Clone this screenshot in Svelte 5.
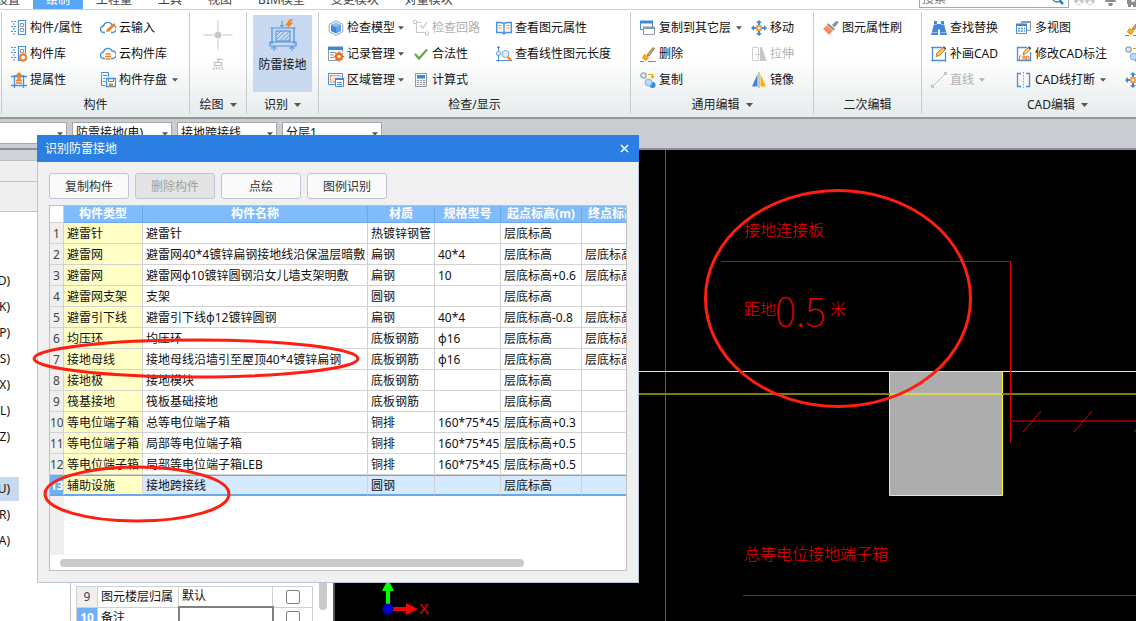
<script lang="ts">
	interface Tool {
		label: string;
		icon: string;
		menu?: boolean;
		disabled?: boolean;
		iconOnly?: boolean;
	}

	interface Group {
		id: string;
		title: string;
		menu?: boolean;
		big?: boolean;
		columns: Tool[][];
	}

	const tabs = ['设置', '绘制', '工程量', '工具', '视图', 'BIM模型', '变更模块', '对量模块'];
	let activeTab = $state('绘制');

	const groups: Group[] = [
		{
			id: 'component',
			title: '构件',
			columns: [
				[
					{ label: '构件/属性', icon: 'props' },
					{ label: '构件库', icon: 'library' },
					{ label: '提属性', icon: 'extract' }
				],
				[
					{ label: '云输入', icon: 'cloudpen' },
					{ label: '云构件库', icon: 'cloud' },
					{ label: '构件存盘', icon: 'save', menu: true }
				]
			]
		},
		{ id: 'draw', title: '绘图', menu: true, big: true, columns: [[{ label: '点', icon: 'point', disabled: true }]] },
		{ id: 'detect', title: '识别', menu: true, big: true, columns: [[{ label: '防雷接地', icon: 'ground' }]] },
		{
			id: 'check',
			title: '检查/显示',
			columns: [
				[
					{ label: '检查模型', icon: 'cube', menu: true },
					{ label: '记录管理', icon: 'record', menu: true },
					{ label: '区域管理', icon: 'region', menu: true }
				],
				[
					{ label: '检查回路', icon: 'circuit', disabled: true },
					{ label: '合法性', icon: 'tick' },
					{ label: '计算式', icon: 'calc' }
				],
				[
					{ label: '查看图元属性', icon: 'book' },
					{ label: '查看线性图元长度', icon: 'length' }
				]
			]
		},
		{
			id: 'edit',
			title: '通用编辑',
			menu: true,
			columns: [
				[
					{ label: '复制到其它层', icon: 'layers', menu: true },
					{ label: '删除', icon: 'broom' },
					{ label: '复制', icon: 'copy' }
				],
				[
					{ label: '移动', icon: 'move' },
					{ label: '拉伸', icon: 'stretch', disabled: true },
					{ label: '镜像', icon: 'mirror' }
				]
			]
		},
		{ id: 'second', title: '二次编辑', columns: [[{ label: '图元属性刷', icon: 'brush' }]] },
		{
			id: 'cad',
			title: 'CAD编辑',
			menu: true,
			columns: [
				[
					{ label: '查找替换', icon: 'find' },
					{ label: '补画CAD', icon: 'pencil' },
					{ label: '直线', icon: 'line', menu: true, disabled: true }
				],
				[
					{ label: '多视图', icon: 'views' },
					{ label: '修改CAD标注', icon: 'cadpen' },
					{ label: 'CAD线打断', icon: 'break', menu: true }
				],
				[
					{ label: '删除', icon: 'broom', iconOnly: true },
					{ label: '复制', icon: 'copy', iconOnly: true },
					{ label: '移动', icon: 'move', iconOnly: true }
				]
			]
		}
	];

	const filters = ['', '防雷接地(电)', '接地跨接线', '分层1'];
	const shortcuts = ['D)', 'K)', 'P)', 'S)', 'X)', 'L)', 'Z)', '', 'U)', 'R)', 'A)'];

	const headers = ['构件类型', '构件名称', '材质', '规格型号', '起点标高(m)', '终点标高(m)'];
	const rows = [
		['避雷针', '避雷针', '热镀锌钢管', '', '层底标高', ''],
		['避雷网', '避雷网40*4镀锌扁钢接地线沿保温层暗敷', '扁钢', '40*4', '层底标高', '层底标高'],
		['避雷网', '避雷网φ10镀锌圆钢沿女儿墙支架明敷', '扁钢', '10', '层底标高+0.6', '层底标高'],
		['避雷网支架', '支架', '圆钢', '', '层底标高', ''],
		['避雷引下线', '避雷引下线φ12镀锌圆钢', '扁钢', '40*4', '层底标高-0.8', '层底标高'],
		['均压环', '均压环', '底板钢筋', 'φ16', '层底标高', '层底标高'],
		['接地母线', '接地母线沿墙引至屋顶40*4镀锌扁钢', '底板钢筋', 'φ16', '层底标高', '层底标高'],
		['接地极', '接地模块', '底板钢筋', '', '层底标高', ''],
		['筏基接地', '筏板基础接地', '底板钢筋', '', '层底标高', ''],
		['等电位端子箱', '总等电位端子箱', '铜排', '160*75*45', '层底标高+0.3', ''],
		['等电位端子箱', '局部等电位端子箱', '铜排', '160*75*45', '层底标高+0.5', ''],
		['等电位端子箱', '局部等电位端子箱LEB', '铜排', '160*75*45', '层底标高+0.5', ''],
		['辅助设施', '接地跨接线', '圆钢', '', '层底标高', '']
	];
	let selected = $state(12);
</script>

{#snippet arrow()}
	<svg class="arrow" width="7" height="4" viewBox="0 0 7 4" aria-hidden="true"><path d="M0 0h7L3.500 4z" fill="currentColor" /></svg>
{/snippet}

{#snippet icon(name: string)}
	<svg class="icon" viewBox="0 0 16 16" fill="none" stroke="#4a8fd9" aria-hidden="true">
		{#if name === 'props' || name === 'library'}
			<path d="M0 1.500h5M0 6.500h5M0 11.500h5M2 4h3M2 9h3M2 14h3" stroke-dasharray="2 1" />
			<path d="M7.500 .5h7v14h-7z" stroke-width="1.200" />
			<path d="M9.500 3.500h3v3h-3zM9.500 8.500h3v3h-3z" stroke="#8b99a8" />
			{#if name === 'library'}
				<circle cx="12" cy="11.500" r="3" stroke="#f07f2a" stroke-width="2" fill="#fff" />
				<path d="M12 7v2M12 14v2M7.500 11.500h2M14.500 11.500H16M9 8.500l1 1M14 13.500l1 1M9 14.500l1-1" stroke="#f07f2a" />
			{/if}
		{:else if name === 'extract'}
			<path d="M3.500 3v13M12.500 3v13M0 4.500h16M0 13.500h16" stroke-width="1.300" />
			<path d="M8 0L4 4h2.500v4h3V4H12z" fill="#f07f2a" stroke="none" />
			<path d="M5 8.500h6M5 11h6" stroke="#f07f2a" stroke-width="1.500" />
		{:else if name === 'cloudpen' || name === 'cloud'}
			<path d="M5 12.500H4A3.200 3.200 0 0 1 3.500 6 4.500 4.500 0 0 1 12 5a3.700 3.700 0 0 1 1 7.500h-2" stroke-width="1.400" />
			{#if name === 'cloudpen'}
				<path d="M6 12l1-3 7-6 1.500 2L9 11.500z" fill="#f58220" stroke="none" />
			{:else}
				<path d="M5.500 8h5M5 10.500h6M5.500 13h5" stroke="#f58220" stroke-width="1.600" />
			{/if}
		{:else if name === 'save'}
			<path d="M5 13.500H1.500V.5h7V5M3 3.500h4M3 6.500h2M3 9.500h2" />
			<path d="M6.500 6.500h9v8h-9z" fill="#fff" stroke-width="1.400" />
			<path d="M8.500 6.500h5v3h-5z" />
			<path d="M9 11.500h4v3H9z" fill="#f58220" stroke="none" />
		{:else if name === 'point'}
			<path d="M8 .7v14.600M.7 8h14.600" stroke="#c4c4c4" stroke-width=".500" />
			<circle cx="8" cy="8" r="2" fill="#c8c8c8" stroke="#fff" stroke-width=".400" />
		{:else if name === 'ground'}
			<path d="M1.800 4.500h12.500M2.500 4.500v8M13.500 4.500v8M1.500 11.500h13v2h-13zM3.500 13.500v1M12.500 13.500v1M2 14.500h3M11 14.500h3M3 15.500h1M12 15.500h1" stroke-width=".600" />
			<path d="M4.500 6h7v5h-7z" stroke-width=".500" />
			<path d="M5 8l2-2M5 10l4-4M6.500 10.800L11 6.300M8.500 10.800l2.700-2.700M10.500 10.800l.7-.7" stroke-width=".400" />
			<path d="M7.500 1v3M6.500 3l1 1 1-1" stroke-width=".500" />
			<path d="M11.500 0L9 3.200h1.600L9.800 5l3.500-3.200h-1.800L13 0z" fill="#f58220" stroke="none" />
		{:else if name === 'cube'}
			<path d="M8 .7l6.800 3.600v7.400L8 15.300l-6.800-3.600V4.300z" stroke="#9aa5b0" />
			<path d="M8 2.500L13 5v6l-5 2.500L3 11V5z" fill="#3f87dc" stroke="none" />
			<path d="M8 2.500L13 5 8 7.500 3 5z" fill="#8fc0f5" stroke="none" />
			<path d="M8 7.500v6l5-2.500V5z" fill="#60a5ee" stroke="none" />
		{:else if name === 'record'}
			<path d="M.5 1v13.500h9M14.500 1v5" stroke="#8b99a8" />
			<path d="M0 .5h15v3.500H0z" fill="#3f87dc" stroke="none" />
			<path d="M2 6.500h6M2 9h4M2 11.500h4" stroke="#8b99a8" />
			<circle cx="11" cy="10.500" r="3" stroke="#f06a1d" stroke-width="2.400" />
			<path d="M11 5v2M11 14v2M6 10.500h2M14 10.500h2M7.500 7l1 1M14.500 14l-1-1M7.500 14l1-1M14.500 7l-1 1" stroke="#f06a1d" />
		{:else if name === 'region'}
			<path d="M.5 1.500h14v11H.5z" />
			<path d="M2.500 3.500h9.500v6.500H2.500z" fill="#ffe9d6" stroke="#f06a1d" stroke-dasharray="2 1" />
			<path d="M7.500 6.500h8v8h-8z" fill="#fff" />
			<path d="M7 6h9v2H7z" fill="#3f87dc" stroke="none" />
			<path d="M9 10.500h5M9 12.500h5" />
		{:else if name === 'circuit'}
			<path d="M3 2.500h5M3.500 4v8.500H12M7 5l3 3 4-6" stroke="#c8c8c8" stroke-width="1.200" />
			<path d="M.5.5h3v3h-3zM12.500 12h3v3h-3z" fill="#fff" stroke="#c8c8c8" />
		{:else if name === 'tick'}
			<path d="M2 8l4 4.500L14 3.500" stroke="#62a844" stroke-width="2.200" />
		{:else if name === 'calc'}
			<path d="M2.500 1.500h11v13h-11z" stroke="#8b99a8" />
			<path d="M4 3h8v3.500H4z" fill="#3f87dc" stroke="none" />
			<path d="M4 8.500h8M4 10.500h8M4 12.500h5" stroke="#8b99a8" stroke-dasharray="2 1" />
			<path d="M10 12.500h2" stroke="#f58220" stroke-width="1.500" />
		{:else if name === 'book'}
			<path d="M8 3.500C6 2 4 2.500.7 2.500v10H6l2 1.500 2-1.500h5.300v-10C12 2.500 10 2 8 3.500zV13" stroke-width="1.400" />
			<path d="M2.500 5.500h3M2.500 8h3M10.500 5.500h3M10.500 8h3" stroke="#f07f2a" />
		{:else if name === 'length'}
			<path d="M2.500 0v16M1 1.500h3M0 14.500h16" />
			<circle cx="2.500" cy="7.500" r="2" fill="#fff" />
			<circle cx="9.500" cy="8" r="3.500" fill="#e3effb" stroke="#7d9fc5" />
			<path d="M12 11l3.500 4" stroke="#f58220" stroke-width="2.500" />
		{:else if name === 'layers'}
			<path d="M.5 1.500h12v8H.5z" fill="#fff" />
			<path d="M0 .5h13v3H0z" fill="#3f87dc" stroke="none" />
			<path d="M3.500 7.500h11v7h-11z" fill="#fff" stroke="#8b99a8" />
			<path d="M3 6.500h12V9H3z" fill="#8b99a8" stroke="none" />
		{:else if name === 'broom'}
			<path d="M0 15.500h4M8 15.500h8" stroke-width="1.200" />
			<path d="M7 9l6-7.500 1.500 1L9 10z" fill="#cfae74" stroke="#9a7433" />
			<path d="M4.500 8.500l4 3L6 14.500 2.500 12z" fill="#ffb300" stroke="#e98a00" />
		{:else if name === 'copy'}
			<circle cx="3.500" cy="3.500" r="2.700" fill="#e4e6ea" stroke="#9aa5b0" stroke-width="1.300" />
			<circle cx="12.500" cy="13" r="3" fill="#3f87dc" stroke="none" />
			<circle cx="8.500" cy="10.500" r="3.500" fill="#b8d8fa" stroke="#7fb4ee" />
			<path d="M8 2.500h4.500V6M11 4.500l1.500 1.500L14 4.500" stroke="#f5a400" stroke-width="1.200" />
		{:else if name === 'move'}
			<path d="M6 6h4v4H6z" stroke="#f58220" stroke-width="1.400" />
			<path d="M8 0l3 3H9v2H7V3H5zM8 16l-3-3h2v-2h2v2h2zM0 8l3-3v2h2v2H3v2zM16 8l-3 3V9h-2V7h2V5z" fill="#3f87dc" stroke="none" />
		{:else if name === 'stretch'}
			<path d="M1.500 1.500h6v13h-6zM4 8.500h5" stroke="#d0d0d0" />
			<path d="M9 1h2l4.500 14H9z" fill="#c8c8c8" stroke="none" />
		{:else if name === 'mirror'}
			<path d="M6.500 2v12.500H1z" fill="#3f87dc" stroke="none" />
			<path d="M9.500 2v12.500H15z" fill="#ffb300" stroke="none" />
			<path d="M8 0v16" stroke="#8b99a8" />
		{:else if name === 'brush'}
			<path d="M9 5l4-4 3 1-4.500 5.500z" fill="#8793a3" stroke="none" />
			<path d="M5 3l7 6-1.500 1.500L4 5z" fill="#8793a3" stroke="none" />
			<path d="M4 5.500l6 5L6 15 0 8.500z" fill="#ff8a5c" stroke="none" />
		{:else if name === 'find'}
			<path d="M3 1h3v3h4V1h3v3l3 11H9V9.500H7V15H0L3 4z" fill="#3f87dc" stroke="none" />
			<path d="M1 12.500h5.500M9.500 12.500H15M3 4.500h3M10 4.500h3" stroke="#8fc0f5" />
		{:else if name === 'pencil' || name === 'cadpen'}
			<path d="M11 1.500H1.500v13h13V6" stroke-width="1.300" />
			{#if name === 'cadpen'}
				<path d="M5.500 10H3.500v4h2M7 14v-4h2v4M7 12h2M10.500 10v4h1.500l1-1v-2l-1-1z" stroke="#f07f2a" />
				<path d="M7 8.500l1-3L13 1l2 1.500L10 7.500z" fill="#ffd38a" stroke="#c77a28" />
			{:else}
				<path d="M0 1.500h3M0 14.500h3M14.500 13v3" />
				<path d="M5 10.500l1-3.500L12.500 1 15 3 8.500 9.500z" fill="#ffc36b" stroke="#c77a28" />
			{/if}
			<path d="M12.500 1l2 1.800" stroke="#555" stroke-width="1.800" />
		{:else if name === 'line'}
			<path d="M2 14L14 2" stroke="#c0c0c0" />
			<path d="M.5 13.500h2v2h-2zM13.500 .5h2v2h-2z" fill="#fff" stroke="#b8b8b8" />
		{:else if name === 'views'}
			<path d="M5.500 1.500h9v9h-9z" fill="#fff" stroke="#8b99a8" />
			<path d="M5 1h10v2H5z" fill="#8b99a8" stroke="none" />
			<path d="M.5 4.500h10v9H.5z" fill="#fff" />
			<path d="M0 3.500h11V6H0z" fill="#3f87dc" stroke="none" />
			<path d="M2 8.500h7M2 11h7" stroke-dasharray="2 1" stroke-width="1.400" />
		{:else if name === 'break'}
			<path d="M5 1.500H1.500v13H5M10 1.500h3.500v13H10" stroke-width="1.300" />
			<path d="M7.500 0v16" stroke="#f07f2a" stroke-dasharray="1.500 1.500" />
		{/if}
	</svg>
{/snippet}

<div class="app">
	<header class="top">
		<nav class="tabs">
			{#each tabs as tab}
				<button class="tab" class:active={tab === activeTab} onclick={() => (activeTab = tab)}>{tab}</button>
			{/each}
		</nav>
		<div class="top-right">
			<div class="search">
				<input type="text" placeholder="搜索" aria-label="搜索" />
				<svg width="12" height="12" viewBox="0 0 12 12" aria-hidden="true"><circle cx="5" cy="5" r="4" fill="none" stroke="#2980b9" stroke-width="1.500" /><path d="M7.500 7.500L11 11" stroke="#2980b9" stroke-width="2.500" /></svg>
			</div>
			<svg class="status" width="62" height="18" viewBox="0 0 62 18" aria-hidden="true">
				<circle cx="5" cy="9" r="5" fill="#c9c9c9" />
				<circle cx="16" cy="9" r="5" fill="#c9c9c9" />
				<path d="M2 13l3-4 3 4zM13 13l3-4 3 4z" fill="#fff" />
				<path d="M31 11h11v-1l-2-2V3h-7v5l-2 2zM34 12h5l-1 3h-3z" fill="#8d8d8d" />
				<path d="M53 6h9v10h-3v-2h-2v2h-3v-3h-1z" fill="#8d8d8d" />
				<circle cx="59" cy="9" r="2" fill="#fff" />
			</svg>
		</div>
	</header>

	<div class="ribbon">
		{#each groups as group}
			<section class="group {group.id}">
				<div class="tools">
					{#each group.columns as column}
						<div class="column">
							{#each column as tool}
								<button
									class="tool"
									class:big={group.big}
									class:current={tool.icon === 'ground'}
									disabled={tool.disabled}
									aria-label={tool.label}
								>
									{@render icon(tool.icon)}
									{#if !tool.iconOnly}<span>{tool.label}</span>{/if}
									{#if tool.menu}{@render arrow()}{/if}
								</button>
							{/each}
						</div>
					{/each}
				</div>
				<div class="title">
					{group.title}
					{#if group.menu}{@render arrow()}{/if}
				</div>
			</section>
		{/each}
	</div>

	<div class="filters">
		{#each filters as filter, i}
			<div class="filter">
				<select aria-label={filter || `${i}`}>
					<option>{filter}</option>
				</select>
				{@render arrow()}
			</div>
		{/each}
	</div>

	<main class="workspace">
		<aside class="sidebar">
			<div class="strip"></div>
			<div class="bar"></div>
			<div class="bar tall"></div>
			<ul>
				{#each shortcuts as key}
					<li class:chosen={key === 'U)'}>{key}</li>
				{/each}
			</ul>
		</aside>

		<section class="properties">
			<table>
				<tbody>
					<tr>
						<th>9</th>
						<td class="name">图元楼层归属</td>
						<td class="value">默认</td>
						<td class="check"><input type="checkbox" aria-label="图元楼层归属" /></td>
					</tr>
					<tr class="editing">
						<th>10</th>
						<td class="name">备注</td>
						<td class="value"><input type="text" aria-label="备注" /></td>
						<td class="check"><input type="checkbox" aria-label="备注" /></td>
					</tr>
				</tbody>
			</table>
			<div class="vthumb"></div>
		</section>

		<section class="canvas">
			<svg viewBox="335 150 801 471" preserveAspectRatio="xMinYMin slice" fill="none" stroke-width="1">
				<path d="M665.500 150V621" stroke="#5c5c5c" />
				<path d="M889.500 371.500h113v124h-113z" fill="#adadad" stroke="#ffff00" />
				<path d="M639 371.500H1136" stroke="#ffff00" />
				<path d="M639 394H1136" stroke="#808000" stroke-width="2" />
				<path d="M890 394H1002" stroke="#d8d850" stroke-width="2" />
				<path d="M721 261.500H1010.500V442.500" stroke="#e00000" />
				<path d="M1010 421H1136" stroke="#800000" stroke-width="2" />
				<path d="M1023 432l18-21M1074 432l18-21M1134 432l18-21M743 595.500H1136" stroke="#e00000" />
				<g class="drawing-text">
					<text x="744" y="236">接地连接板</text>
					<text x="744" y="315">距地</text>
					<text class="large" x="775" y="326">0.5</text>
					<text x="830" y="315">米</text>
					<text x="744" y="560">总等电位接地端子箱</text>
				</g>
				<path d="M386 606V591h-4l6-12 6 12h-4v15z" fill="#00ff00" />
				<path d="M390 607h16v-4l12 6-12 6v-4h-16z" fill="#ff0000" />
				<circle cx="388" cy="609" r="5.500" fill="#0000c8" />
				<text class="axis" x="419" y="614">X</text>
			</svg>
		</section>
	</main>

	<div class="dialog" role="dialog" aria-labelledby="dialog-title">
		<div class="dialog-head">
			<span id="dialog-title">识别防雷接地</span>
			<button aria-label="关闭">
				<svg width="9" height="9" viewBox="0 0 9 9" aria-hidden="true"><path d="M1 1l7 7M8 1L1 8" stroke="#fff" stroke-width="1.500" /></svg>
			</button>
		</div>
		<div class="dialog-body">
			<div class="actions">
				<button>复制构件</button>
				<button disabled>删除构件</button>
				<button>点绘</button>
				<button>图例识别</button>
			</div>
			<div class="grid">
				<table>
					<colgroup>
						<col class="c-num" />
						<col class="c-type" />
						<col class="c-name" />
						<col class="c-material" />
						<col class="c-spec" />
						<col class="c-level" />
						<col class="c-level" />
					</colgroup>
					<thead>
						<tr>
							<td></td>
							{#each headers as header}
								<th>{header}</th>
							{/each}
						</tr>
					</thead>
					<tbody>
						{#each rows as row, i}
							<tr class:selected={i === selected} onclick={() => (selected = i)}>
								<th>{i + 1}</th>
								{#each row as cell}
									<td>{cell}</td>
								{/each}
							</tr>
						{/each}
					</tbody>
				</table>
				<div class="gutter"></div>
				<div class="track"><div class="hthumb"></div></div>
			</div>
		</div>
	</div>

	<svg class="marks" viewBox="0 0 1136 621" preserveAspectRatio="xMinYMin slice" fill="none" stroke="#ff1e10" stroke-width="3" aria-hidden="true">
		<ellipse cx="196" cy="358.500" rx="162" ry="18.500" />
		<ellipse cx="137" cy="494" rx="92" ry="27" />
		<ellipse cx="838" cy="298.500" rx="132.500" ry="108" />
	</svg>
</div>

<style>
	:global(body) {
		margin: 0;
	}

	.app {
		position: relative;
		display: flex;
		flex-direction: column;
		height: 100vh;
		overflow: hidden;
		background: #fff;
		color: #111;
		font: 12px/16px 'Noto Sans', 'Noto Sans CJK SC', sans-serif;
	}

	button,
	input,
	select {
		font: inherit;
		color: inherit;
		box-sizing: border-box;
		margin: 0;
	}

	button {
		padding: 0;
		border: 0;
		background: none;
		white-space: nowrap;
	}

	/* top tabs */
	.top {
		display: flex;
		justify-content: space-between;
		align-items: flex-end;
		height: 9px;
		flex: none;
		overflow: hidden;
		border-bottom: 1px solid #d0d0d0;
	}

	.tabs {
		display: flex;
		margin-left: -17px;
	}

	.tab {
		height: 18px;
		padding: 0 13px;
		color: #444;
	}

	.tab.active {
		background: #5aa7f7;
		color: #fff;
	}

	.top-right {
		display: flex;
		align-items: flex-end;
		gap: 5px;
	}

	.search {
		display: flex;
		align-items: center;
		width: 150px;
		height: 18px;
		margin-bottom: 1px;
		box-sizing: border-box;
		border: 1px solid #a8a8a8;
		padding: 0 4px 0 2px;
	}

	.search input {
		flex: 1;
		min-width: 0;
		border: 0;
		padding: 0;
		background: none;
	}

	/* ribbon */
	.ribbon {
		display: grid;
		grid-template-columns: 188px 57px 72px 312px 183px 108px minmax(272px, 1fr);
		flex: none;
		height: 107px;
		padding-left: 1px;
		border-bottom: 2px solid #8f9897;
		background: linear-gradient(#fff 45%, #e6ebeb);
	}

	.group {
		display: flex;
		flex-direction: column;
		justify-content: space-between;
		margin: 2px 0 3px;
		border-left: 1px solid #c8cccc;
	}

	.tools {
		display: grid;
		justify-content: start;
		padding: 3px 0 0 9px;
	}

	.component .tools {
		grid-template-columns: 89px auto;
	}

	.check .tools {
		grid-template-columns: 85px 83px auto;
	}

	.edit .tools {
		grid-template-columns: 111px auto;
	}

	.cad .tools {
		grid-template-columns: 85px 109px auto;
	}

	.draw .tools,
	.detect .tools {
		justify-content: center;
		padding-left: 0;
	}

	.tool {
		display: flex;
		align-items: center;
		gap: 3px;
		height: 26px;
	}

	.icon {
		width: 16px;
		height: 16px;
		flex: none;
	}

	.tool:disabled {
		color: #b0b0b0;
	}

	.tool .arrow {
		width: 6px;
		color: #555;
	}

	.tool:disabled .arrow {
		color: #b0b0b0;
	}

	.component .arrow,
	.edit .tool .arrow,
	.cad .tool .arrow {
		margin-left: 2px;
	}

	.big {
		flex-direction: column;
		gap: 6px;
		height: 77px;
		padding: 4px 5px 0;
		width: 59px;
	}

	.draw .big {
		width: 40px;
	}

	.big .icon {
		width: 32px;
		height: 32px;
	}

	.current {
		background: #c9d9f0;
	}

	.title {
		display: flex;
		justify-content: center;
		align-items: center;
		gap: 6px;
		padding-bottom: 1px;
		color: #222;
	}

	.title .arrow {
		color: #555;
	}

	/* filter bar */
	.filters {
		display: flex;
		gap: 5px;
		flex: none;
		height: 22px;
		padding: 3px 0 4px;
		background: #c9ccd1;
		border-bottom: 2px solid #8a8e95;
	}

	.filter {
		position: relative;
		width: 100px;
	}

	.filter:first-child {
		margin-left: -33px;
	}

	.filter select {
		appearance: none;
		width: 100%;
		height: 22px;
		padding: 0 16px 0 3px;
		border: 1px solid #a6a6a6;
		border-radius: 0;
		background: #fff;
	}

	.filter .arrow {
		position: absolute;
		right: 4px;
		top: 10px;
		width: 6px;
		color: #555;
	}

	/* workspace */
	.workspace {
		display: grid;
		grid-template-columns: 70px 265px 1fr;
		flex: 1;
		min-height: 0;
	}

	.strip {
		height: 10px;
		background: #d0d2d8;
		border-bottom: 1px solid #b8bcc4;
	}

	.bar {
		height: 20px;
		background: #efefef;
		border-bottom: 1px solid #c4c4c4;
	}

	.bar.tall {
		height: 29px;
	}

	ul {
		margin: 57px 0 0;
		padding: 0;
		list-style: none;
	}

	li {
		display: flex;
		justify-content: flex-end;
		align-items: center;
		box-sizing: border-box;
		width: 19px;
		height: 24px;
		margin-bottom: 2px;
		padding-right: 9px;
	}

	.chosen {
		background: #c9d9f0;
	}

	.properties {
		display: flex;
		align-items: flex-end;
		gap: 6px;
		min-height: 0;
		overflow: hidden;
		box-sizing: border-box;
		padding-left: 5px;
		border-left: 1px solid #c4c4c8;
		border-right: 2px solid #55585c;
	}

	.properties table {
		border-collapse: collapse;
		table-layout: fixed;
		width: 237px;
		margin-bottom: -8px;
	}

	.properties th,
	.properties td {
		box-sizing: border-box;
		height: 21px;
		padding: 0 0 0 3px;
		border: 1px solid #d0d0d0;
		line-height: 18px;
		white-space: nowrap;
	}

	.properties th {
		width: 21px;
		padding: 0;
		background: #efefef;
		color: #444;
		font-weight: 400;
	}

	.properties .editing th {
		background: #6fb1f8;
		color: #fff;
		font-weight: 700;
	}

	.name {
		width: 81px;
	}

	.value {
		width: 94px;
	}

	.properties .editing .value {
		padding: 0;
		border: 2px solid #808080;
	}

	.value input {
		display: block;
		width: 100%;
		height: 17px;
		padding: 0 2px;
		border: 0;
	}

	.properties .check {
		padding: 0;
		text-align: center;
	}

	.check input {
		display: block;
		appearance: none;
		width: 14px;
		height: 14px;
		margin: 0 auto;
		border: 1px solid #808080;
		border-radius: 2px;
		background: #fff;
	}

	.vthumb {
		width: 8px;
		height: 60px;
		margin-bottom: 11px;
		border-radius: 4px;
		background: #cacaca;
	}

	.canvas {
		min-height: 0;
		background: #000;
	}

	.canvas svg {
		display: block;
		width: 100%;
		height: 100%;
	}

	.drawing-text {
		fill: #f00000;
		font: 300 16px 'Noto Sans CJK SC', sans-serif;
	}

	.drawing-text .large {
		font-size: 40px;
		font-weight: 100;
	}

	.axis {
		fill: #f00;
		font: 15px 'Liberation Sans', sans-serif;
	}

	/* dialog */
	.dialog {
		position: absolute;
		left: 37px;
		top: 135px;
		width: 602px;
		box-sizing: border-box;
		border: 1px solid #b8c4d8;
		border-top: 0;
		background: #f0f0f0;
	}

	.dialog-head {
		display: flex;
		justify-content: space-between;
		align-items: center;
		height: 27px;
		margin: 0 -1px;
		padding: 0 10px 0 8px;
		background: #2c7fe2;
		color: #fff;
	}

	.dialog-head button {
		display: flex;
	}

	.dialog-body {
		padding: 11px;
	}

	.actions {
		display: flex;
		gap: 6px;
		margin-bottom: 6px;
	}

	.actions button {
		width: 80px;
		height: 26px;
		padding-top: 2px;
		border: 1px solid #bcc6d8;
		border-radius: 3px;
		background: #fafafb;
		color: #333;
	}

	.actions button:disabled {
		background: #e4e4e4;
		color: #a0a0a0;
	}

	.grid {
		display: flex;
		flex-direction: column;
		overflow: hidden;
		border: 1px solid #bfbfbf;
		background: #fff;
	}

	.grid table {
		border-collapse: separate;
		border-spacing: 0;
		table-layout: fixed;
		width: 612px;
	}

	.c-num {
		width: 14px;
	}

	.c-type {
		width: 79px;
	}

	.c-name {
		width: 225px;
	}

	.c-material {
		width: 67px;
	}

	.c-spec {
		width: 66px;
	}

	.c-level {
		width: 81px;
	}

	.grid th,
	.grid td {
		box-sizing: border-box;
		height: 21px;
		padding: 2px 0 0 3px;
		border-right: 1px solid #d2d2d2;
		border-bottom: 1px solid #d2d2d2;
		overflow: hidden;
		white-space: nowrap;
		line-height: 16px;
	}

	.grid thead td {
		height: 17px;
		padding: 0;
	}

	.grid thead th {
		height: 17px;
		padding: 0;
		border-color: #69a9ec;
		background: #80bbfb;
		color: #fff;
		font-weight: 700;
		text-align: center;
	}

	.grid tbody th {
		padding: 2px 0 0;
		background: #efefef;
		color: #444;
		font-weight: 400;
		text-align: center;
	}

	.grid td:nth-child(2) {
		background: #ffffc6;
	}

	.grid .selected td,
	.grid .selected th {
		border-top: 1px solid #68a9ea;
		border-bottom: 2px solid #68a9ea;
	}

	.grid .selected td {
		background: #d5e9ff;
	}

	.grid .selected td:nth-child(2) {
		background: #ffffc6;
	}

	.grid .selected th {
		background: #6fb1f8;
		color: #fff;
		font-weight: 700;
	}

	.gutter {
		width: 14px;
		height: 59px;
		background: #efefef;
	}

	.track {
		padding: 4px 102px 3px 10px;
	}

	.hthumb {
		height: 8px;
		border-radius: 4px;
		background: #cacaca;
	}

	.marks {
		position: absolute;
		inset: 0;
		width: 100%;
		height: 100%;
		pointer-events: none;
	}
</style>
